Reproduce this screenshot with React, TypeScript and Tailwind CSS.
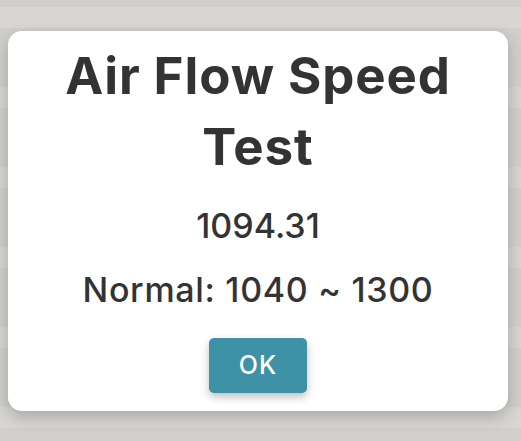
import React from "react";

export default function App() {
  return (
    <div className="min-h-[441px] w-[521px] overflow-hidden bg-[repeating-linear-gradient(180deg,#d0cfcb_0px,#d0cfcb_7px,#d7d6d2_7px,#d7d6d2_28px,#d0cfcb_28px,#d0cfcb_80px)] pl-2 pt-[31px] font-['Inter','Open_Sans',sans-serif] text-[#333333]">
      {/* dialog */}
      <div className="flex h-[380px] w-[500px] flex-col items-center rounded-[14px] bg-white pt-[9px] shadow-[0_6px_16px_rgba(0,0,0,0.22)]">
        <h2 className="w-[440px] text-center text-[51px] font-bold leading-[71px] tracking-[0.9px]">
          Air Flow Speed Test
        </h2>
        <p className="mt-5 text-[34px] font-medium leading-[48px]">1094.31</p>
        <p className="mt-4 text-[34px] font-medium leading-[48px] tracking-[0.7px]">
          Normal: 1040 ~ 1300
        </p>
        <button
          type="button"
          className="mt-6 flex h-[55px] w-[98px] items-center justify-center rounded-[5px] bg-[#3f91a6] text-[25px] font-medium tracking-[1px] text-white shadow-[0_4px_8px_rgba(0,0,0,0.25)]"
        >
          OK
        </button>
      </div>
    </div>
  );
}
